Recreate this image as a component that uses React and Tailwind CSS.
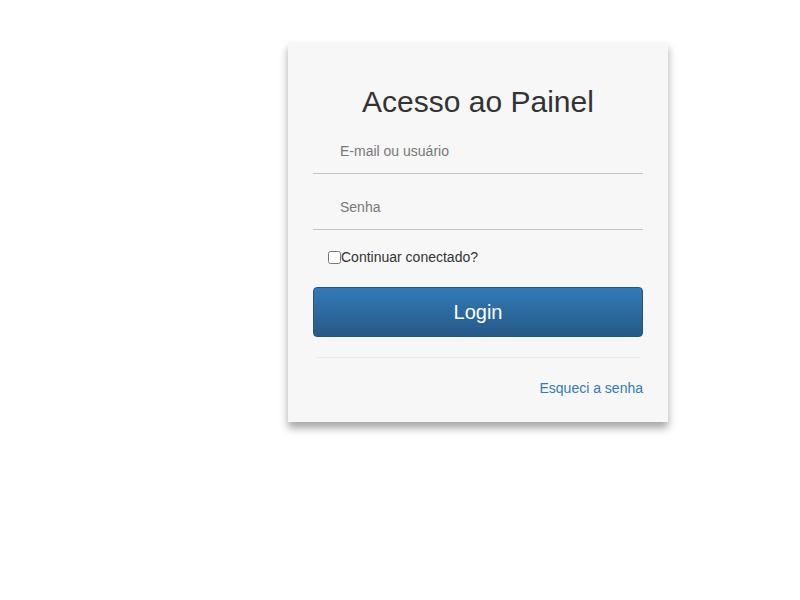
export default function App() {
  return (
    <div className="min-h-[600px] w-[800px] bg-white pt-[42px] font-['Liberation_Sans',Arial,sans-serif]">
      <div className="ml-[288px] w-[380px] bg-[#f7f7f7] px-[25px] pt-[43px] pb-[24px] shadow-[0_6px_8px_rgba(0,0,0,0.35)]">
        <h1 className="text-center text-[30px] leading-[33px] text-[#333]">Acesso ao Painel</h1>
        <input
          type="text"
          placeholder="E-mail ou usuário"
          className="mt-[11px] block h-[45px] w-full border-b border-[#c4c4c4] bg-transparent pl-[27px] text-[14px] text-[#555] outline-none placeholder:text-[#777]"
        />
        <input
          type="password"
          placeholder="Senha"
          className="mt-[11px] block h-[45px] w-full border-b border-[#c4c4c4] bg-transparent pl-[27px] text-[14px] text-[#555] outline-none placeholder:text-[#777]"
        />
        <label className="mt-[17px] flex h-[20px] items-center pl-[15px] text-[14px] text-[#333]">
          <input type="checkbox" className="m-0 h-[13px] w-[13px]" />
          <span>Continuar conectado?</span>
        </label>
        <button className="mt-[20px] block h-[50px] w-full rounded-[4px] border border-[#245580] bg-gradient-to-b from-[#337ab7] to-[#265a88] text-[20px] text-white">
          Login
        </button>
        <div className="mx-[3px] mt-[20px] h-px bg-[#ebebeb]" />
        <div className="mt-[20px] text-right text-[14px] leading-[20px]">
          <a href="#" className="text-[#337ab7]">Esqueci a senha</a>
        </div>
      </div>
    </div>
  );
}
